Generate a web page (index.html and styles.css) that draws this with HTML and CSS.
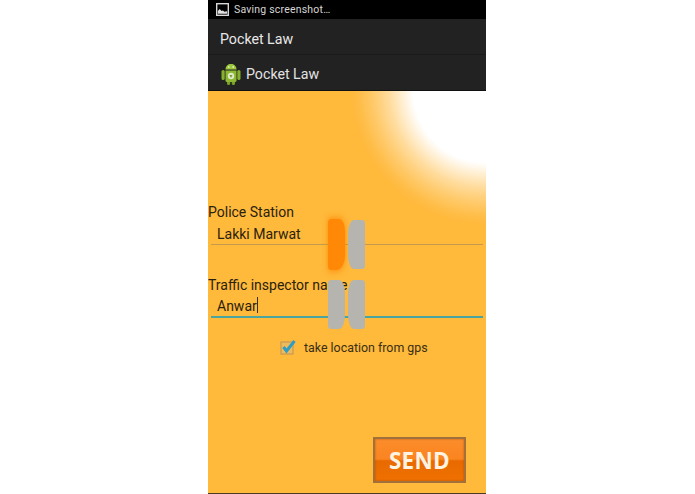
FILE: index.html
```html
<!DOCTYPE html>
<html lang="en">
<head>
<meta charset="utf-8">
<title>Pocket Law</title>
<link rel="stylesheet" href="styles.css">
</head>
<body>
<main class="phone">
  <div class="status">
    <svg class="status-icon" viewBox="0 0 14 14" width="14" height="14"><rect x="0.75" y="0.75" width="12.5" height="12.5" fill="none" stroke="#d8d8d8" stroke-width="1.5"/><path d="M2 11.5V8.5L4 6.5L6 8.5L7.5 8L9 9.5L12 9V11.500Z" fill="#e0e0e0"/></svg>
    <span>Saving screenshot…</span>
  </div>
  <div class="titlebar">Pocket Law</div>
  <div class="actionbar">
    <svg class="logo" viewBox="0 0 20 22" width="20" height="22">
      <rect x="0.5" y="7" width="3.200" height="10" rx="1.600" fill="#86b02c"/>
      <rect x="16.300" y="7" width="3.200" height="10" rx="1.600" fill="#86b02c"/>
      <rect x="6" y="17" width="3.200" height="5" rx="1.500" fill="#76a022"/>
      <rect x="10.800" y="17" width="3.200" height="5" rx="1.500" fill="#76a022"/>
      <path d="M4.500 6.500C4.500 3 7 1 10 1S15.500 3 15.500 6.500Z" fill="#9cc63c"/>
      <path d="M4.500 7.500H15.500V17.500Q15.500 19 14 19H6Q4.500 19 4.500 17.500Z" fill="#8cb832"/>
      <circle cx="7.800" cy="4" r="0.800" fill="#fff"/>
      <circle cx="12.200" cy="4" r="0.800" fill="#fff"/>
      <circle cx="10" cy="13" r="3.200" fill="#dfe8c8"/>
      <path d="M8.500 12H11.500L10 15Z" fill="#7a9c30"/>
    </svg>
    <span>Pocket Law</span>
  </div>
  <section class="content">
    <div class="sun"></div>
    <div class="form">
      <label class="label">Police Station</label>
      <div class="field"><span>Lakki Marwat</span></div>
      <label class="label label-second">Traffic inspector name</label>
      <div class="field field-active"><span>Anwar</span><i class="caret"></i></div>
      <div class="check-row">
        <svg class="check" viewBox="0 0 17 16" width="17" height="16"><rect x="1" y="3" width="12" height="12" fill="#f0b95a" stroke="#c69a55" stroke-width="1.200"/><path d="M3.500 8L6.500 12L14.500 2" fill="none" stroke="#2c9ec4" stroke-width="3"/></svg>
        <span>take location from gps</span>
      </div>
    </div>
    <div class="handle h-orange"></div>
    <div class="handle h-grey-1"></div>
    <div class="handle h-grey-2"></div>
    <div class="handle h-grey-3"></div>
    <div class="send-row"><button class="send" type="button">SEND</button></div>
  </section>
</main>
</body>
</html>
```
FILE: styles.css
```css
* { box-sizing: border-box; }
html, body { margin: 0; height: 100%; background: #fff; }
body { display: flex; justify-content: center; font-family: Roboto, "Liberation Sans", sans-serif; overflow: hidden; }
.phone { width: 278px; height: 494px; margin-left: -1px; display: flex; flex-direction: column; background: #000; }
.status { height: 19px; background: #000; color: #d6d6d6; font-size: 10.5px; display: flex; align-items: center; gap: 5px; padding-left: 8px; letter-spacing: .2px; }
.status-icon { width: 13px; height: 13px; }
.titlebar { height: 36px; background: #222; color: #e8e8e8; font-size: 14.2px; display: flex; align-items: center; padding: 4px 0 0 12px; border-bottom: 1px solid #1a1a1a; }
.actionbar { height: 36px; background: #222; color: #e2e2e2; font-size: 14.2px; display: flex; align-items: center; gap: 5px; padding: 3px 0 0 13px; border-bottom: 1px solid #111; }
.content { position: relative; flex: 1; overflow: hidden; background: #ffb93b; border-bottom: 1px solid #4a3a20; }
.sun { position: absolute; left: 143px; top: -136px; width: 270px; height: 270px; border-radius: 50%; background: radial-gradient(circle closest-side, #fff 0, #fff 54%, rgba(255,255,255,.78) 62%, rgba(255,255,255,.5) 72%, rgba(255,255,255,.26) 83%, rgba(255,255,255,.08) 93%, rgba(255,255,255,0) 100%); }
.form { position: relative; padding-top: 112px; color: #2a2210; }
.label { display: block; font-size: 14px; line-height: 18px; }
.label-second { margin-top: 31px; }
.field { margin: 0 3px; height: 24px; font-size: 14px; line-height: 18px; padding: 4px 0 0 6px; border-bottom: 1px solid #c49a50; }
.field-active { height: 24px; padding-top: 3px; border-bottom: 2px solid #4aa5a0; display: flex; align-items: flex-start; }
.caret { display: block; width: 1px; height: 16px; background: #3a3020; }
.check-row { display: flex; align-items: center; gap: 7px; margin: 21px 0 0 72px; font-size: 12.4px; color: #3a2f18; }
.handle { position: absolute; width: 17px; background: #b6b4ae; }
.h-orange { left: 120px; top: 128px; height: 51px; background: #ff8806; border-radius: 3px 6px 9px 3px / 4px 12px 14px 4px; box-shadow: 0 -3px 5px 0 rgba(255,136,6,.55), 0 3px 5px 0 rgba(255,136,6,.55); }
.h-grey-1 { left: 140px; top: 129px; height: 49px; border-radius: 6px 3px 3px 6px / 14px 4px 4px 14px; }
.h-grey-2 { left: 120px; top: 189px; height: 49px; border-radius: 3px 6px 6px 3px / 4px 14px 14px 4px; }
.h-grey-3 { left: 140px; top: 189px; height: 49px; border-radius: 6px 3px 3px 6px / 14px 4px 4px 14px; }
.send-row { position: absolute; left: 0; right: 0; bottom: 10px; display: flex; justify-content: flex-end; padding-right: 20px; }
.send { width: 93px; height: 46px; padding: 0; border: 2px solid #a2703a; font: 700 22.5px "Open Sans", "Liberation Sans", sans-serif; letter-spacing: .3px; color: #fff3e2; background: linear-gradient(#fb8d2a 0, #fa8420 48%, #e86a00 52%, #f07000 100%); box-shadow: inset 0 0 2px rgba(120,60,0,.6); }
```
